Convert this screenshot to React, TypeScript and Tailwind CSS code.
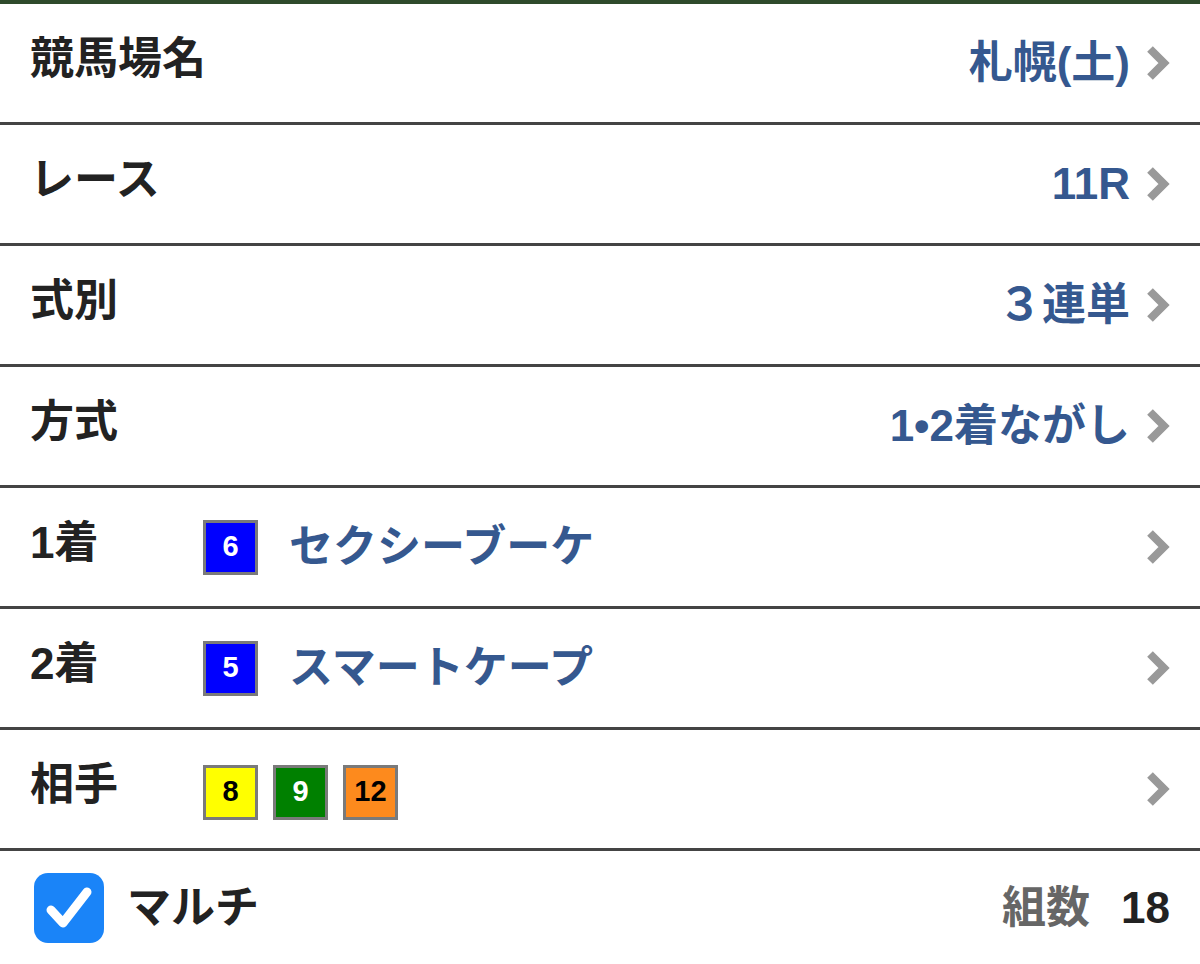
import React from "react";

const FONT = { fontFamily: '"Liberation Sans", "Noto Sans CJK JP", sans-serif' };

function Chevron() {
  return (
    <svg width="24" height="36" viewBox="0 0 24 36" className="shrink-0">
      <polyline points="4,4 18,18 4,32" fill="none" stroke="#999999" strokeWidth="8" strokeLinejoin="miter" />
    </svg>
  );
}

function Badge({ n, bg, fg }: { n: string; bg: string; fg: string }) {
  return (
    <div
      className={`w-[55px] h-[55px] border-[3px] border-[#7a7a7a] flex items-center justify-center text-[29px] font-bold ${bg} ${fg}`}
    >
      {n}
    </div>
  );
}

function ValueRow({ label, value }: { label: string; value: string }) {
  return (
    <div className="h-[121px] border-b-[3px] border-[#444444] flex items-center pl-[30px] pr-[30px]">
      <div className="text-[44px] font-bold text-[#222222] pb-[8px] leading-none">{label}</div>
      <div className="flex-1" />
      <div className="text-[44px] font-bold text-[#35588f] leading-none mr-[16px]">{value}</div>
      <Chevron />
    </div>
  );
}

export default function App() {
  return (
    <div className="w-[1200px] h-[964px] bg-white overflow-hidden" style={FONT}>
      <div className="h-[4px] bg-[#2e4a2b]" />
      <ValueRow label="競馬場名" value="札幌(土)" />
      <ValueRow label="レース" value="11R" />
      <ValueRow label="式別" value="３連単" />
      <ValueRow label="方式" value="1•2着ながし" />
      <div className="h-[121px] border-b-[3px] border-[#444444] flex items-center pl-[30px] pr-[30px]">
        <div className="w-[173px] text-[44px] font-bold text-[#222222] pb-[8px] leading-none">1着</div>
        <Badge n="6" bg="bg-[#0000ff]" fg="text-white" />
        <div className="ml-[31px] text-[44px] font-bold text-[#35588f] leading-none">セクシーブーケ</div>
        <div className="flex-1" />
        <Chevron />
      </div>
      <div className="h-[121px] border-b-[3px] border-[#444444] flex items-center pl-[30px] pr-[30px]">
        <div className="w-[173px] text-[44px] font-bold text-[#222222] pb-[8px] leading-none">2着</div>
        <Badge n="5" bg="bg-[#0000ff]" fg="text-white" />
        <div className="ml-[31px] text-[44px] font-bold text-[#35588f] leading-none">スマートケープ</div>
        <div className="flex-1" />
        <Chevron />
      </div>
      <div className="h-[121px] border-b-[3px] border-[#444444] flex items-center pl-[30px] pr-[30px]">
        <div className="w-[173px] text-[44px] font-bold text-[#222222] pb-[8px] leading-none">相手</div>
        <div className="flex gap-[15px] pt-[6px]">
          <Badge n="8" bg="bg-[#ffff00]" fg="text-black" />
          <Badge n="9" bg="bg-[#008000]" fg="text-white" />
          <Badge n="12" bg="bg-[#fd8a1d]" fg="text-black" />
        </div>
        <div className="flex-1" />
        <Chevron />
      </div>
      <div className="h-[113px] flex items-center pl-[34px] pr-[30px]">
        <div className="w-[70px] h-[70px] rounded-[14px] bg-[#1a84f8] flex items-center justify-center">
          <svg width="56" height="56" viewBox="0 0 56 56">
            <polyline points="10,30 22,43 46,12" fill="none" stroke="white" strokeWidth="9" strokeLinecap="round" strokeLinejoin="round" />
          </svg>
        </div>
        <div className="ml-[23px] text-[44px] font-bold text-[#222222] leading-none">マルチ</div>
        <div className="flex-1" />
        <div className="text-[44px] font-bold text-[#666666] leading-none">組数</div>
        <div className="ml-[31px] text-[44px] font-bold text-[#222222] leading-none">18</div>
      </div>
    </div>
  );
}
